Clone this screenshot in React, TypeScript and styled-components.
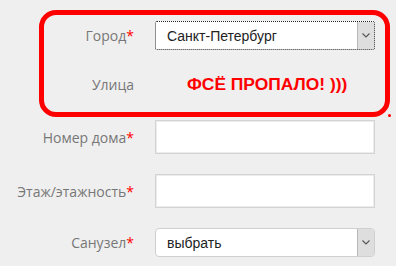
import React from "react";
import styled, { createGlobalStyle } from "styled-components";

const Global = createGlobalStyle`
  html, body { margin: 0; padding: 0; background: #efefef; }
  body { width: 396px; height: 266px; overflow: hidden; }
`;

const Page = styled.div`
  display: flex;
  flex-direction: column;
  padding-top: 10px;
  font-family: "Open Sans", "Liberation Sans", sans-serif;
`;

const Highlight = styled.div`
  position: relative;
  margin-left: 39px;
  width: 351px;
  height: 107px;
  box-sizing: border-box;
  border: 5px solid #ff0000;
  border-radius: 17px;
  padding-top: 6px;
  display: flex;
  flex-direction: column;
  gap: 20px;
`;

const Dot = styled.span`
  position: absolute;
  right: -6px;
  bottom: -5px;
  width: 3px;
  height: 3px;
  border-radius: 50%;
  background: #ff0000;
`;

const Rows = styled.div`
  display: flex;
  flex-direction: column;
  gap: 20px;
  margin-top: 3px;
`;

const Row = styled.div<{ $labelWidth: number; $height: number }>`
  display: grid;
  grid-template-columns: ${(p) => p.$labelWidth}px 220px;
  column-gap: 21px;
  align-items: center;
  height: ${(p) => p.$height}px;
`;

const Label = styled.div`
  text-align: right;
  font-size: 14px;
  color: #777;
  white-space: nowrap;
`;

const Req = styled.span`
  color: #ff0000;
`;

const Input = styled.div`
  height: 34px;
  box-sizing: border-box;
  background: #fff;
  border: 1px solid #d3d3d3;
  box-shadow: inset 0 0 0 1px #ececec;
`;

const Select = styled.div<{ $focused?: boolean }>`
  height: 29px;
  box-sizing: border-box;
  display: flex;
  align-items: stretch;
  background: #fff;
  border: 1px ${(p) => (p.$focused ? "dotted #222" : "solid #cfcfcf")};
  border-radius: ${(p) => (p.$focused ? "2px" : "4px")};
  overflow: hidden;
  font-family: "Liberation Sans", Arial, sans-serif;
  font-size: 14px;
  color: #222;
`;

const SelectText = styled.div`
  flex: 1;
  display: flex;
  align-items: center;
  padding-left: 11px;
`;

const Arrow = styled.div`
  width: 16px;
  display: flex;
  align-items: center;
  justify-content: center;
  background: #dedede;
  border-left: 1px solid #b8b8b8;
`;

const Lost = styled.div`
  font-family: "Liberation Sans", Arial, sans-serif;
  font-weight: bold;
  font-size: 17.4px;
  color: #ff0000;
  padding-left: 32px;
  white-space: nowrap;
  margin-top: -1px;
`;

const Chevron = () => (
  <svg width="8" height="5" viewBox="0 0 8 5">
    <path d="M0.5 0.5 L4 4 L7.5 0.5" fill="none" stroke="#555" strokeWidth="1.1" />
  </svg>
);

export default function App() {
  return (
    <>
      <Global />
      <Page>
        <Highlight>
          <Row $labelWidth={90} $height={29}>
            <Label>
              Город<Req>*</Req>
            </Label>
            <Select $focused>
              <SelectText>Санкт-Петербург</SelectText>
              <Arrow>
                <Chevron />
              </Arrow>
            </Select>
          </Row>
          <Row $labelWidth={90} $height={29}>
            <Label>Улица</Label>
            <Lost>ФСЁ ПРОПАЛО! )))</Lost>
          </Row>
          <Dot />
        </Highlight>
        <Rows>
          <Row $labelWidth={134} $height={34}>
            <Label>
              Номер дома<Req>*</Req>
            </Label>
            <Input />
          </Row>
          <Row $labelWidth={134} $height={34}>
            <Label>
              Этаж/этажность<Req>*</Req>
            </Label>
            <Input />
          </Row>
          <Row $labelWidth={134} $height={29}>
            <Label>
              Санузел<Req>*</Req>
            </Label>
            <Select>
              <SelectText>выбрать</SelectText>
              <Arrow>
                <Chevron />
              </Arrow>
            </Select>
          </Row>
        </Rows>
      </Page>
    </>
  );
}
